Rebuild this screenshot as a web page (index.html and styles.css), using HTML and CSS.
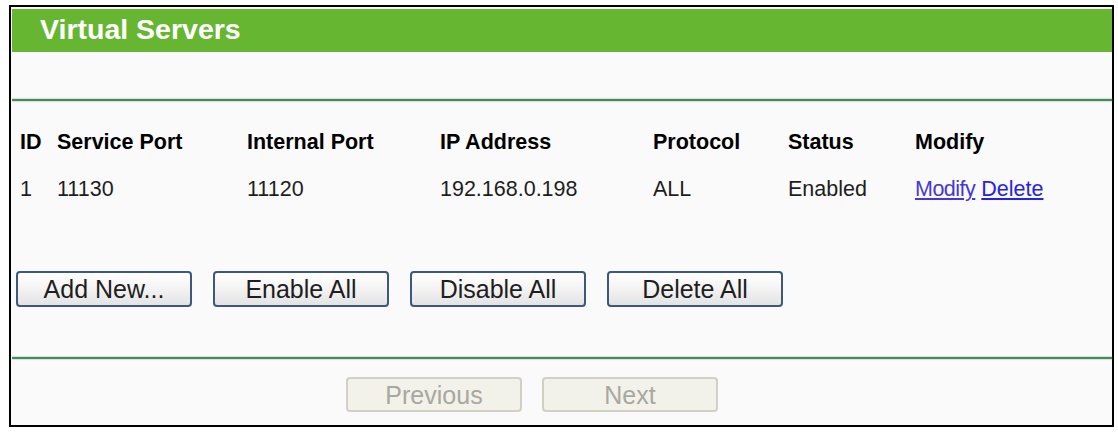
FILE: index.html
```html
<!DOCTYPE html>
<html>
<head>
<meta charset="utf-8">
<link rel="stylesheet" href="styles.css">
</head>
<body>
<div class="frame">
  <div class="title">Virtual Servers</div>
  <div class="spacer"></div>
  <div class="rule"></div>
  <div class="row head">
    <div class="c-id">ID</div>
    <div class="c-sp">Service Port</div>
    <div class="c-ip">Internal Port</div>
    <div class="c-addr">IP Address</div>
    <div class="c-proto">Protocol</div>
    <div class="c-status">Status</div>
    <div class="c-mod">Modify</div>
  </div>
  <div class="row data">
    <div class="c-id">1</div>
    <div class="c-sp">11130</div>
    <div class="c-ip">11120</div>
    <div class="c-addr">192.168.0.198</div>
    <div class="c-proto">ALL</div>
    <div class="c-status">Enabled</div>
    <div class="c-mod"><a href="#" class="lnk visited">Modify</a> <a href="#" class="lnk">Delete</a></div>
  </div>
  <div class="actions">
    <button class="btn">Add New...</button>
    <button class="btn">Enable All</button>
    <button class="btn">Disable All</button>
    <button class="btn">Delete All</button>
  </div>
  <div class="rule rule-bottom"></div>
  <div class="pager">
    <button class="btn disabled" disabled>Previous</button>
    <button class="btn disabled" disabled>Next</button>
  </div>
</div>
</body>
</html>
```
FILE: styles.css
```css
html, body {
  margin: 0;
  padding: 0;
  background: #ffffff;
}
body {
  font-family: "Liberation Sans", Arial, sans-serif;
  font-size: 21.5px;
  color: #1e1e1e;
}
.frame {
  box-sizing: border-box;
  margin: 5px 0 0 9px;
  width: 1105px;
  height: 422px;
  border: 2px solid #000;
  padding: 2px 0 0 1px;
  background: #fafafa;
}
.title {
  height: 43px;
  line-height: 41px;
  background: #67b632;
  color: #ffffff;
  font-weight: bold;
  font-size: 28.5px;
  padding-left: 28px;
}
.spacer {
  height: 47px;
}
.rule {
  height: 2px;
  background: #4a8660;
  box-shadow: 0 1px 1px #cfe6d2, 0 -1px 1px #cfe6d2;
}
.row {
  display: grid;
  grid-template-columns: 37px 190px 193px 213px 135px 127px 1fr;
  padding-left: 8px;
  height: 47px;
  line-height: 47px;
  white-space: nowrap;
}
.head {
  margin-top: 18px;
  font-weight: bold;
  color: #000;
}
.lnk {
  color: #2323e6;
  text-decoration: underline;
}
.lnk.visited {
  color: #4338d6;
  letter-spacing: -0.5px;
}
.actions {
  display: flex;
  gap: 21px;
  padding-left: 4px;
  margin-top: 58px;
  height: 36px;
}
.btn {
  box-sizing: border-box;
  width: 176px;
  height: 36px;
  padding: 0;
  font-family: "Liberation Sans", Arial, sans-serif;
  font-size: 25px;
  line-height: 32px;
  color: #1e1e1e;
  background: linear-gradient(#ffffff, #f3f3f3 50%, #e3e3e3);
  border: 2px solid #3d5878;
  border-radius: 4px;
}
.rule-bottom {
  margin-top: 50px;
}
.pager {
  display: flex;
  gap: 20px;
  padding-left: 334px;
  margin-top: 18px;
}
.btn.disabled {
  height: 35px;
  color: #a8a8a0;
  background: #f2f1ea;
  border: 2px solid #d2d0c4;
}
```
